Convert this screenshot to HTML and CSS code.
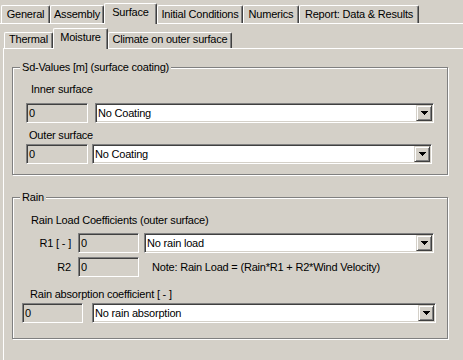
FILE: index.html
```html
<!DOCTYPE html>
<html lang="en">
<head>
    <meta charset="UTF-8">
    <title>Surface - Moisture</title>
    <link rel="stylesheet" href="styles.css">
</head>
<body>
    <div class="tabrow main-tabs">
        <div class="tab t-general">General</div>
        <div class="tab t-assembly">Assembly</div>
        <div class="tab active t-surface">Surface</div>
        <div class="tab t-initial">Initial Conditions</div>
        <div class="tab t-numerics">Numerics</div>
        <div class="tab t-report">Report: Data &amp; Results</div>
    </div>

    <div class="page">
        <div class="tabrow sub-tabs">
            <div class="tab t-thermal">Thermal</div>
            <div class="tab active t-moisture">Moisture</div>
            <div class="tab t-climate">Climate on outer surface</div>
        </div>

        <div class="subpage">
            <div class="group coating">
                <span class="group-title">Sd-Values [m] (surface coating)</span>

                <div class="label lbl-inner">Inner surface</div>
                <div class="field-row row-inner">
                    <div class="edit wide">0</div>
                    <div class="combo combo-inner">
                        <span class="combo-text">No Coating</span>
                        <span class="combo-btn"><svg width="7" height="4" shape-rendering="crispEdges"><path d="M0 0h7v1H0zM1 1h5v1H1zM2 2h3v1H2zM3 3h1v1H3z"/></svg></span>
                    </div>
                </div>

                <div class="label lbl-outer">Outer surface</div>
                <div class="field-row row-outer">
                    <div class="edit wide">0</div>
                    <div class="combo combo-outer">
                        <span class="combo-text">No Coating</span>
                        <span class="combo-btn"><svg width="7" height="4" shape-rendering="crispEdges"><path d="M0 0h7v1H0zM1 1h5v1H1zM2 2h3v1H2zM3 3h1v1H3z"/></svg></span>
                    </div>
                </div>
            </div>

            <div class="group rain">
                <span class="group-title">Rain</span>

                <div class="label lbl-coeff">Rain Load Coefficients (outer surface)</div>
                <div class="field-row row-r1">
                    <div class="coef-name">R1 [ - ]</div>
                    <div class="edit">0</div>
                    <div class="combo combo-load">
                        <span class="combo-text">No rain load</span>
                        <span class="combo-btn"><svg width="7" height="4" shape-rendering="crispEdges"><path d="M0 0h7v1H0zM1 1h5v1H1zM2 2h3v1H2zM3 3h1v1H3z"/></svg></span>
                    </div>
                </div>
                <div class="field-row row-r2">
                    <div class="coef-name">R2</div>
                    <div class="edit">0</div>
                    <div class="note">Note: Rain Load = (Rain*R1 + R2*Wind Velocity)</div>
                </div>

                <div class="label lbl-absorb">Rain absorption coefficient [ - ]</div>
                <div class="field-row row-absorb">
                    <div class="edit">0</div>
                    <div class="combo combo-absorb">
                        <span class="combo-text">No rain absorption</span>
                        <span class="combo-btn"><svg width="7" height="4" shape-rendering="crispEdges"><path d="M0 0h7v1H0zM1 1h5v1H1zM2 2h3v1H2zM3 3h1v1H3z"/></svg></span>
                    </div>
                </div>
            </div>
        </div>
    </div>
</body>
</html>
```

FILE: styles.css
```css
* {
    margin: 0;
    padding: 0;
    box-sizing: border-box;
}

body {
    font-family: "Liberation Sans", Arial, sans-serif;
    font-size: 11px;
    letter-spacing: -0.2px;
    color: #000;
    background: #d4d0c8;
    width: 463px;
    height: 360px;
    overflow: hidden;
}

/* tabs */

.tabrow {
    display: flex;
    align-items: flex-end;
}

.main-tabs {
    height: 23px;
    padding-left: 1px;
}

.sub-tabs {
    height: 24px;
    padding-left: 4px;
}

.tab {
    height: 18px;
    border: 1px solid #fff;
    border-bottom: none;
    border-right-color: #404040;
    border-radius: 2px 2px 0 0;
    box-shadow: inset -1px 0 0 #808080;
    text-align: center;
    line-height: 16px;
    white-space: nowrap;
}

.tab.active {
    position: relative;
    height: 21px;
    margin-bottom: -1px;
    line-height: 17px;
    background: #d4d0c8;
}

.sub-tabs .tab {
    height: 16px;
    line-height: 13px;
}

.sub-tabs .tab.active {
    height: 21px;
    line-height: 16px;
}

.t-general { width: 49px; }
.t-assembly { width: 54px; }
.t-surface { width: 53px; }
.t-initial { width: 86px; }
.t-numerics { width: 56px; }
.t-report { width: 120px; }

.t-thermal { width: 49px; }
.t-moisture { width: 55px; }
.t-climate { width: 124px; }

.page {
    border-top: 1px solid #fff;
    height: 337px;
}

.subpage {
    margin-left: 3px;
    height: 313px;
    border-top: 1px solid #fff;
    border-left: 1px solid #fff;
}

/* group boxes */

.group {
    position: relative;
    width: 436px;
    margin-left: 8px;
    border: 1px solid #808080;
    box-shadow: 1px 1px 0 #fff, inset 1px 1px 0 #fff;
}

.group-title {
    position: absolute;
    top: -7px;
    left: 7px;
    padding: 0 2px;
    line-height: 13px;
    background: #d4d0c8;
}

.coating {
    margin-top: 18px;
    padding: 15px 0 10px 13px;
}

.rain {
    margin-top: 22px;
    padding: 16px 0 15px 0;
}

.label {
    line-height: 13px;
}

.lbl-inner { margin-left: 5px; }
.lbl-outer { margin-left: 3px; margin-top: 6px; }
.lbl-coeff { margin-left: 18px; }
.lbl-absorb { margin-left: 17px; margin-top: 11px; }

/* fields */

.field-row {
    display: flex;
    height: 20px;
}

.row-inner { margin-top: 7px; }
.row-outer { margin-top: 2px; }
.row-r1 { margin-top: 6px; }
.row-r2 { margin-top: 4px; }
.row-absorb { margin-top: 2px; margin-left: 9px; }

.edit,
.combo {
    height: 20px;
    padding: 1px;
    border: 1px solid #fff;
    border-top-color: #808080;
    border-left-color: #808080;
    box-shadow: inset 1px 1px 0 #404040, inset -1px -1px 0 #d4d0c8;
    line-height: 16px;
}

.edit {
    width: 61px;
    padding-left: 2px;
    background: #d4d0c8;
}

.edit.wide {
    width: 62px;
}

.combo {
    display: flex;
    background: #fff;
}

.combo-text {
    flex: 1;
    padding-left: 1px;
    white-space: nowrap;
}

.combo-btn {
    width: 16px;
    height: 16px;
    display: flex;
    align-items: center;
    justify-content: center;
    background: #d4d0c8;
    border: 1px solid #404040;
    border-top-color: #d4d0c8;
    border-left-color: #d4d0c8;
    box-shadow: inset 1px 1px 0 #fff, inset -1px -1px 0 #808080;
}

.combo-inner { width: 339px; margin-left: 7px; }
.combo-outer { width: 340px; margin-left: 4px; }
.combo-load { width: 290px; margin-left: 5px; }
.combo-absorb { width: 344px; margin-left: 9px; }

.coef-name {
    width: 58px;
    margin-right: 7px;
    text-align: right;
    line-height: 20px;
}

.note {
    margin-left: 13px;
    line-height: 20px;
    white-space: nowrap;
}
```
